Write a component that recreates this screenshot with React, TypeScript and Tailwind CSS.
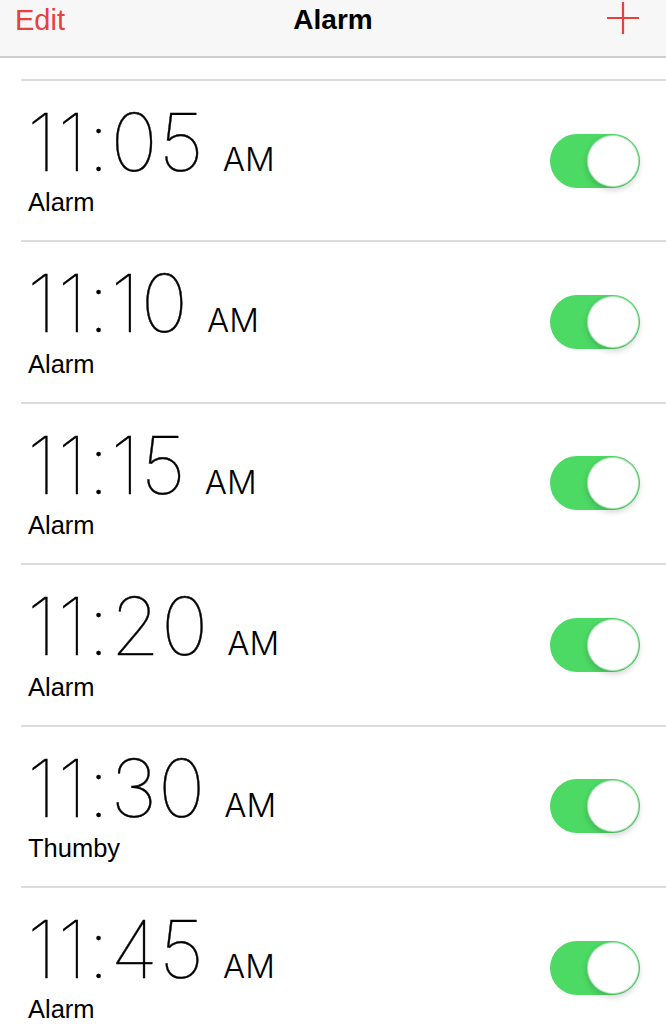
import React from 'react';

const alarms = [
  { time: '11:05', label: 'Alarm' },
  { time: '11:10', label: 'Alarm' },
  { time: '11:15', label: 'Alarm' },
  { time: '11:20', label: 'Alarm' },
  { time: '11:30', label: 'Thumby' },
  { time: '11:45', label: 'Alarm' },
];

const Toggle = () => (
  <div className="relative w-[90px] h-[54px] rounded-full bg-[#4cd964] mr-[26px] shrink-0">
    <div className="absolute right-[1px] top-[1px] w-[52px] h-[52px] rounded-full bg-white border border-[#3fbf55]/40 shadow-[0_3px_6px_rgba(0,0,0,0.18)]" />
  </div>
);

export default function App() {
  return (
    <div className="w-[666px] h-[1024px] overflow-hidden bg-white font-['Liberation_Sans',Arial,sans-serif]">
      {/* Nav bar */}
      <div className="h-[58px] bg-[#f7f7f8] border-b-2 border-[#cfcfd2] grid grid-cols-[1fr_auto_1fr] items-start px-[15px] pt-[1px]">
        <span className="text-[29px] leading-[38px] text-[#e8403a] justify-self-start">Edit</span>
        <span className="text-[28px] leading-[38px] font-bold text-black">Alarm</span>
        <svg width="32" height="32" viewBox="0 0 32 32" className="mt-[1px] mr-[12px] justify-self-end">
          <path d="M16 0v32M0 16h32" stroke="#e8403a" strokeWidth="2.2" fill="none" />
        </svg>
      </div>

      <div className="h-[21px]" />

      <div className="flex flex-col">
        {alarms.map((a, i) => (
          <div key={i} className="ml-[21px] h-[161.4px] border-t-2 border-[#dcdcdc] flex items-center justify-between">
            <div className="pl-[6px] flex flex-col -mt-[5px]">
              <div className="flex items-baseline font-['Inter',sans-serif] text-black">
                <span className="text-[80px] leading-[84px] font-thin tracking-[1px] [-webkit-text-stroke:0.4px_#000]">{a.time}</span>
                <span className="text-[33px] font-light ml-[18px]">AM</span>
              </div>
              <span className="text-[25.5px] leading-[28px] text-black mt-[4px] pl-[1px]">{a.label}</span>
            </div>
            <Toggle />
          </div>
        ))}
      </div>
    </div>
  );
}
